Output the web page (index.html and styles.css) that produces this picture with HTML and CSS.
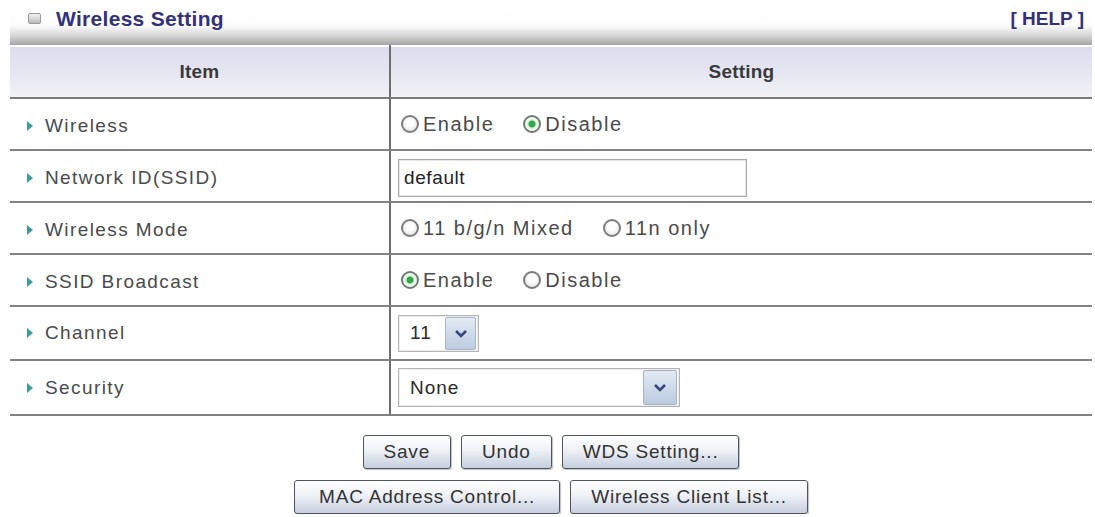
FILE: index.html
```html
<!DOCTYPE html>
<html lang="en">
<head>
    <meta charset="UTF-8">
    <title>Wireless Setting</title>
    <link rel="stylesheet" href="styles.css">
</head>
<body>
    <div class="panel">
        <div class="titlebar">
            <div class="title"><span class="box-icon"></span>Wireless Setting</div>
            <a class="help" href="#">[ HELP ]</a>
        </div>

        <table class="settings">
            <tr>
                <th class="col-item">Item</th>
                <th>Setting</th>
            </tr>
            <tr>
                <td class="label"><span class="arrow"></span>Wireless</td>
                <td>
                    <label class="opt"><input type="radio" name="wl">Enable</label>
                    <label class="opt"><input type="radio" name="wl" checked>Disable</label>
                </td>
            </tr>
            <tr>
                <td class="label"><span class="arrow"></span>Network ID(SSID)</td>
                <td><input class="text" type="text" value="default"></td>
            </tr>
            <tr>
                <td class="label"><span class="arrow"></span>Wireless Mode</td>
                <td>
                    <label class="opt"><input type="radio" name="mode">11 b/g/n Mixed</label>
                    <label class="opt"><input type="radio" name="mode">11n only</label>
                </td>
            </tr>
            <tr>
                <td class="label"><span class="arrow"></span>SSID Broadcast</td>
                <td>
                    <label class="opt"><input type="radio" name="bc" checked>Enable</label>
                    <label class="opt"><input type="radio" name="bc">Disable</label>
                </td>
            </tr>
            <tr class="row-channel">
                <td class="label"><span class="arrow"></span>Channel</td>
                <td>
                    <div class="select small">
                        <span class="value">11</span>
                        <span class="drop"><svg width="14" height="9" viewBox="0 0 14 9"><path d="M2 2 L7 7 L12 2" fill="none" stroke="#34477e" stroke-width="2.6"/></svg></span>
                    </div>
                </td>
            </tr>
            <tr class="row-security">
                <td class="label"><span class="arrow"></span>Security</td>
                <td>
                    <div class="select large">
                        <span class="value">None</span>
                        <span class="drop"><svg width="14" height="9" viewBox="0 0 14 9"><path d="M2 2 L7 7 L12 2" fill="none" stroke="#34477e" stroke-width="2.6"/></svg></span>
                    </div>
                </td>
            </tr>
        </table>

        <div class="actions">
            <div class="btn-row">
                <button class="btn">Save</button>
                <button class="btn">Undo</button>
                <button class="btn">WDS Setting...</button>
            </div>
            <div class="btn-row">
                <button class="btn wide">MAC Address Control...</button>
                <button class="btn">Wireless Client List...</button>
            </div>
        </div>
    </div>
</body>
</html>
```

FILE: styles.css
```css
body {
    margin: 0;
    background-color: #fff;
    font-family: "Liberation Sans", Arial, sans-serif;
    color: #4a4a4a;
}

.panel {
    margin: 3px 3px 0 10px;
}

.titlebar {
    height: 42px;
    display: flex;
    align-items: center;
    justify-content: space-between;
    padding: 0 8px 0 18px;
    background: linear-gradient(#ffffff 0%, #fdfdfd 52%, #d6d6d6 78%, #a4a4a4 100%);
}

.title {
    display: flex;
    align-items: center;
    font-size: 21px;
    font-weight: bold;
    color: #33317a;
    letter-spacing: 0.3px;
    margin-top: -11px;
}

.box-icon {
    width: 11px;
    height: 9px;
    margin-right: 15px;
    border: 1px solid #9a9a9a;
    border-radius: 2px;
    background: linear-gradient(#f4f4f4, #b9b9b9);
}

.help {
    font-size: 19px;
    font-weight: bold;
    color: #33317a;
    text-decoration: none;
    margin-top: -11px;
}

.settings {
    width: 100%;
    border-collapse: collapse;
    font-size: 20px;
    letter-spacing: 1.5px;
}

.settings th {
    height: 50px;
    padding: 0;
    font-size: 19px;
    letter-spacing: 0.2px;
    color: #3a3a3a;
    background: linear-gradient(#dcdced 0%, #e6e6f2 50%, #f1f1f6 100%);
    border-bottom: 2px solid #7a7a7a;
    border-top: 2px solid #ffffff;
}

.settings th.col-item {
    width: 379px;
    border-right: 2px solid #6e6e6e;
}

.settings td {
    height: 47px;
    padding: 3px 0 0 7px;
    border-bottom: 2px solid #828282;
}

.settings td.label {
    padding-left: 17px;
    font-size: 19px;
    letter-spacing: 1.4px;
    border-right: 2px solid #6e6e6e;
}

.row-channel td {
    height: 52px;
    padding-top: 0;
}

.row-security td {
    height: 53px;
    padding-top: 0;
}

.arrow {
    display: inline-block;
    width: 0;
    height: 0;
    margin-right: 12px;
    border-top: 5px solid transparent;
    border-bottom: 5px solid transparent;
    border-left: 6px solid #3c9c9a;
    vertical-align: 1px;
}

.opt {
    display: inline-flex;
    align-items: center;
    margin-right: 19px;
}

.opt input {
    appearance: none;
    width: 18px;
    height: 18px;
    margin: 0 4px 0 3px;
    border: 2px solid #7c7c7c;
    border-radius: 50%;
    background: radial-gradient(circle at 50% 40%, #ffffff 30%, #dcdcdc 100%);
}

.opt input:checked {
    border-color: #6f7a72;
    background: radial-gradient(circle, #2fa84a 0 3px, #d9f2dc 4px, #f6fbf6 7px);
}

.text {
    width: 349px;
    height: 38px;
    box-sizing: border-box;
    padding: 0 5px;
    border: 1px solid #a8a8a8;
    box-shadow: inset 0 0 0 1px #e8e8e8;
    font-family: "Liberation Sans", Arial, sans-serif;
    font-size: 19px;
    letter-spacing: 0.6px;
    color: #222;
}

.select {
    display: flex;
    align-items: center;
    justify-content: space-between;
    box-sizing: border-box;
    border: 1px solid #b4b4b4;
    box-shadow: inset 0 0 0 1px #ececec;
    padding: 2px 2px 2px 11px;
    color: #2a2a2a;
    font-size: 19px;
    letter-spacing: 1px;
}

.select.small {
    width: 81px;
    height: 37px;
}

.select.large {
    width: 282px;
    height: 39px;
}

.drop {
    display: flex;
    align-items: center;
    justify-content: center;
    width: 29px;
    height: 31px;
    border: 1px solid #a7b3c6;
    border-radius: 2px;
    background: linear-gradient(#e3eaf4, #bccbe0);
}

.select.large .drop {
    width: 32px;
    height: 33px;
}

.actions {
    display: flex;
    flex-direction: column;
    align-items: center;
    gap: 11px;
    margin-top: 19px;
}

.btn-row {
    display: flex;
    gap: 10px;
}

.btn {
    height: 34px;
    padding: 0 20px;
    border: 1px solid #4f5560;
    border-radius: 3px;
    background: linear-gradient(#ffffff 0%, #eef1f6 45%, #c6cfdf 100%);
    box-shadow: 1px 1px 1px rgba(0, 0, 0, 0.25);
    font-family: "Liberation Sans", Arial, sans-serif;
    font-size: 19px;
    letter-spacing: 0.8px;
    color: #333;
}

.btn.wide {
    padding: 0 24px;
}
```
